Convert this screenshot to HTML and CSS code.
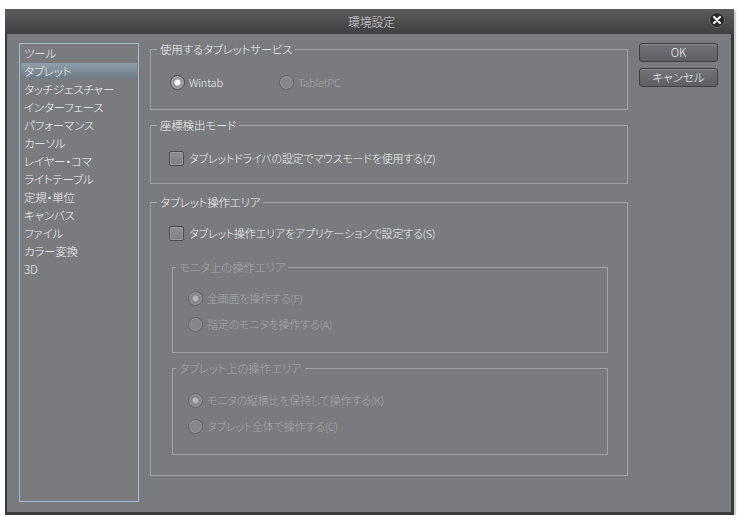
FILE: index.html
```html
<!DOCTYPE html>
<html lang="ja">
<head>
    <meta charset="UTF-8">
    <title>環境設定</title>
    <link rel="stylesheet" href="styles.css">
</head>
<body>

    <div class="window">
        <div class="title-bar">
            <span class="title">環境設定</span>
            <span class="close-btn">
                <svg width="16" height="16" viewBox="0 0 16 16">
                    <circle cx="8" cy="8" r="7.5" fill="#2a2a2c" stroke="#6a6a6c" stroke-width="1"/>
                    <path d="M5 5 L11 11 M11 5 L5 11" stroke="#f2f2f2" stroke-width="2.2" stroke-linecap="round"/>
                </svg>
            </span>
        </div>

        <div class="content">
            <ul class="category-list">
                <li>ツール</li>
                <li class="active">タブレット</li>
                <li>タッチジェスチャー</li>
                <li>インターフェース</li>
                <li>パフォーマンス</li>
                <li>カーソル</li>
                <li>レイヤー・コマ</li>
                <li>ライトテーブル</li>
                <li>定規・単位</li>
                <li>キャンバス</li>
                <li>ファイル</li>
                <li>カラー変換</li>
                <li>3D</li>
            </ul>

            <div class="settings">
                <fieldset class="group group-service">
                    <legend>使用するタブレットサービス</legend>
                    <div class="opt-row">
                        <label class="opt opt-wide"><span class="radio checked"></span>Wintab</label>
                        <label class="opt disabled"><span class="radio"></span>TabletPC</label>
                    </div>
                </fieldset>

                <fieldset class="group group-coord">
                    <legend>座標検出モード</legend>
                    <label class="opt"><span class="check"></span>タブレットドライバの設定でマウスモードを使用する(Z)</label>
                </fieldset>

                <fieldset class="group group-area">
                    <legend>タブレット操作エリア</legend>
                    <label class="opt"><span class="check"></span>タブレット操作エリアをアプリケーションで設定する(S)</label>

                    <fieldset class="subgroup disabled first">
                        <legend>モニタ上の操作エリア</legend>
                        <label class="opt"><span class="radio checked"></span>全画面を操作する(F)</label>
                        <label class="opt"><span class="radio"></span>指定のモニタを操作する(A)</label>
                    </fieldset>

                    <fieldset class="subgroup disabled">
                        <legend>タブレット上の操作エリア</legend>
                        <label class="opt"><span class="radio checked"></span>モニタの縦横比を保持して操作する(K)</label>
                        <label class="opt"><span class="radio"></span>タブレット全体で操作する(C)</label>
                    </fieldset>
                </fieldset>
            </div>

            <div class="buttons">
                <button class="btn">OK</button>
                <button class="btn">キャンセル</button>
            </div>
        </div>
    </div>

</body>
</html>
```

FILE: styles.css
```css
/* General Styles */
body {
    margin: 0;
    padding: 0;
    background: #ffffff;
    font-family: 'Noto Sans CJK JP', 'Noto Sans', sans-serif;
    font-size: 11px;
    font-weight: 300;
    letter-spacing: -0.2px;
    font-feature-settings: "palt";
    color: #f0f0f0;
}

/* Dialog window */
.window {
    margin: 9px 0 0 5px;
    width: 724px;
    height: 503px;
    border-left: 2px solid #3a3a3c;
    border-right: 3px solid #3a3a3c;
    border-bottom: 3px solid #3a3a3c;
    background: #7a7b7f;
    box-shadow: 2px 2px 1px #cfcfcf;
}

.title-bar {
    height: 25px;
    margin-left: -2px;
    margin-right: -3px;
    background: linear-gradient(to bottom, #5c5c5e, #404042);
    display: flex;
    align-items: center;
    justify-content: center;
    position: relative;
}

.title {
    color: #dcdcdc;
    font-size: 12px;
    margin-left: 4px;
}

.close-btn {
    position: absolute;
    right: 9px;
    top: 3px;
    width: 16px;
    height: 16px;
}

.content {
    display: flex;
    align-items: flex-start;
    gap: 11px;
    padding: 9px 10px 0 12px;
}

/* Category list */
.category-list {
    list-style: none;
    margin: 0;
    padding: 0;
    width: 118px;
    height: 457px;
    border: 1px solid #a7bccb;
    flex-shrink: 0;
}

.category-list li {
    height: 18px;
    line-height: 18px;
    padding-left: 3px;
    margin: 0 1px;
    color: #f4f4f4;
    font-size: 11.5px;
    white-space: nowrap;
}

.category-list li.active {
    background: linear-gradient(to bottom,
        transparent 1px, #909ea9 1px, #6f7d88 16px, transparent 16px);
    border-radius: 2px;
}

/* Group boxes */
.settings {
    width: 478px;
    margin-top: -2px;
    flex-shrink: 0;
}

fieldset {
    margin: 0;
    min-width: 0;
    border: 1px solid #a3a4a7;
}

legend {
    line-height: 16px;
    padding: 0 3px;
    margin-left: -12px;
    color: #f4f4f4;
    font-size: 11.5px;
}

.group-service {
    padding: 16px 0 18px 19px;
}

.group-service legend {
    margin-left: -13px;
}

.group-coord {
    margin-top: 7px;
    padding: 16px 0 16px 18px;
}

.group-area {
    margin-top: 10px;
    padding: 14px 19px 20px 18px;
}

.subgroup {
    margin: 17px 0 0 3px;
    padding: 14px 0 19px 15px;
}

.subgroup + .subgroup {
    margin-top: 7px;
    padding-top: 15px;
}

.subgroup legend {
    margin-left: -12px;
}

.subgroup .opt + .opt {
    margin-top: 8px;
}

.disabled,
.disabled legend {
    color: #a6a7aa;
}

/* Options */
.opt-row {
    display: flex;
}

.opt {
    display: flex;
    align-items: center;
    height: 18px;
    gap: 4px;
    white-space: nowrap;
}

.opt-wide {
    width: 109px;
}

.radio {
    width: 13px;
    height: 13px;
    border-radius: 50%;
    border: 1px solid #47484a;
    background: #97989b;
    flex-shrink: 0;
    box-shadow: inset 0 0 0 1px #b0b1b4;
}

.radio.checked {
    background: radial-gradient(circle, #ffffff 0, #ffffff 2.6px, #97989b 3.4px);
}

.disabled .radio {
    border-color: #636467;
    background: #86878a;
    box-shadow: inset 0 0 0 1px #959699;
}

.disabled .radio.checked {
    background: radial-gradient(circle, #b4b5b8 0, #b4b5b8 2.6px, #86878a 3.4px);
}

.check {
    width: 13px;
    height: 13px;
    border: 1px solid #4a4b4d;
    border-radius: 2px;
    background: linear-gradient(to bottom, #8e8f92, #7e7f82);
    box-shadow: inset 0 0 0 1px #9a9b9e;
    margin-right: 1px;
    flex-shrink: 0;
}

/* Buttons */
.buttons {
    display: flex;
    flex-direction: column;
    gap: 6px;
    width: 79px;
    flex-shrink: 0;
}

.btn {
    height: 19px;
    padding: 0;
    border: 1px solid #404042;
    border-radius: 3px;
    background: linear-gradient(to bottom, #737478, #5e5f62);
    box-shadow: inset 0 1px 0 #8a8b8e;
    color: #f4f4f4;
    font-family: 'Noto Sans CJK JP', 'Noto Sans', sans-serif;
    font-size: 11.5px;
    font-weight: 300;
    font-feature-settings: "palt";
    line-height: 17px;
}
```
